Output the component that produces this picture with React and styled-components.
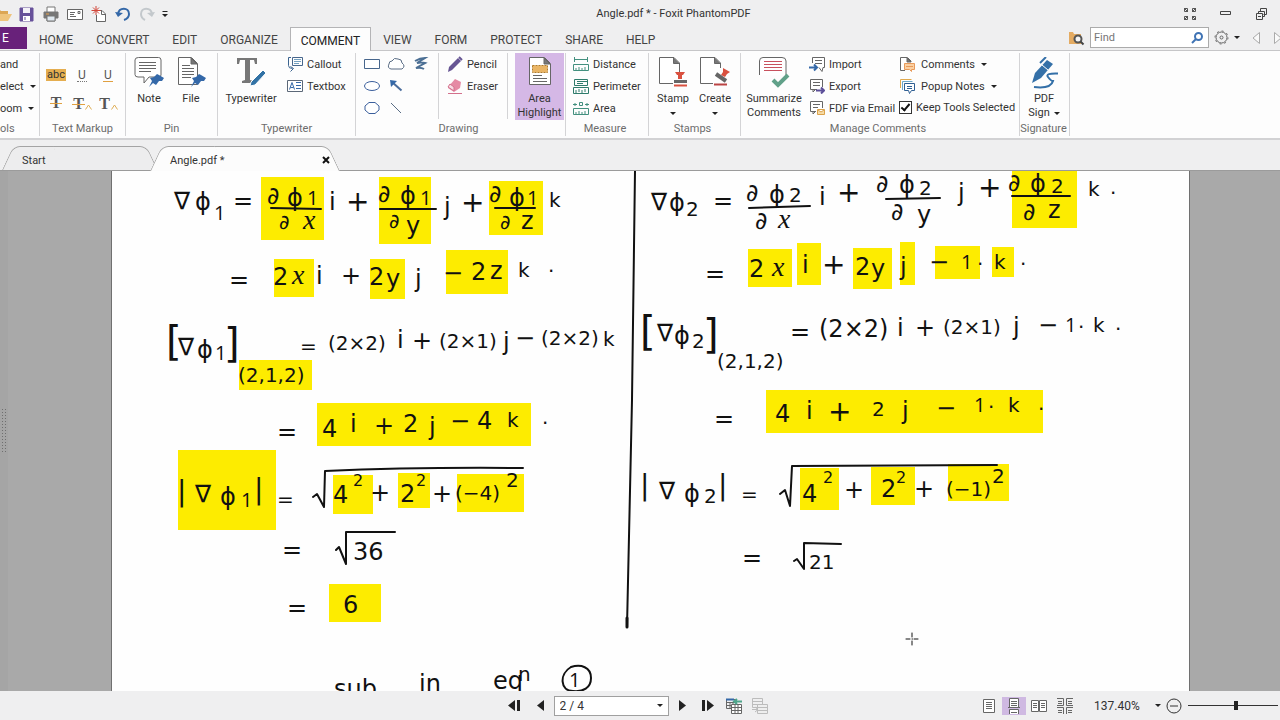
import React from "react";
import styled, { createGlobalStyle, css } from "styled-components";

const GlobalStyle = createGlobalStyle`
  *, *::before, *::after { box-sizing: border-box; }
  body { margin: 0; font-family: Roboto, "Noto Sans", sans-serif; font-size: 11px; color: #333; }
  button, input, select { font: inherit; color: inherit; }
`;

const Window = styled.div`
  display: flex;
  flex-direction: column;
  height: 100vh;
  overflow: hidden;
  background: #efeff0;
`;

const PlainButton = styled.button`
  display: flex;
  align-items: center;
  justify-content: center;
  padding: 0;
  border: 0;
  background: none;
`;

/* ---------- title bar ---------- */

const TitleBar = styled.header`
  display: flex;
  align-items: center;
  height: 27px;
  flex: none;
`;

const QuickButton = styled(PlainButton)`
  width: ${(p) => p.$w || 24}px;
  height: 27px;
  flex: none;
  overflow: hidden;
`;

const Title = styled.h1`
  flex: 1;
  margin: 0;
  padding-left: 4px;
  font-size: 11px;
  font-weight: 400;
  text-align: center;
`;

/* ---------- ribbon tabs ---------- */

const TabBar = styled.nav`
  display: flex;
  gap: 1px;
  height: 24px;
  flex: none;
  border-bottom: 1px solid #c6c6c8;
`;

const FileTab = styled(PlainButton)`
  width: 27px;
  height: 22px;
  padding-right: 16px;
  background: #68217a;
  color: #fff;
  font-size: 12px;
`;

const Tab = styled(PlainButton)`
  height: 23px;
  padding: 3px 11px 0;
  font-size: 12px;
  color: #444;
  ${(p) =>
    p.$active &&
    css`
      height: 24px;
      padding: 3px 10px 0;
      border: 1px solid #b4b4b6;
      border-bottom: 0;
      background: #fdfdfd;
      color: #222;
    `}
`;

const TabTools = styled.div`
  display: flex;
  align-items: center;
  gap: 5px;
  margin-left: auto;
  height: 21px;
`;

const FindBox = styled.label`
  display: flex;
  align-items: center;
  width: 119px;
  height: 21px;
  padding: 0 5px 0 3px;
  border: 1px solid #ababab;
  background: #fff;
`;

const FindInput = styled.input`
  flex: 1;
  min-width: 0;
  padding: 0;
  border: 0;
  outline: 0;
  background: none;
  &::placeholder { color: #767676; opacity: 1; }
`;

/* ---------- ribbon ---------- */

const Ribbon = styled.div`
  display: flex;
  flex: none;
  height: 89px;
  padding-top: 2px;
  border-bottom: 2px solid #d2d2d4;
  background: #fdfdfd;
`;

const Group = styled.section`
  display: flex;
  flex-direction: column;
  flex: none;
  width: ${(p) => p.$w}px;
  height: 83px;
  border-right: 1px solid #d4d4d6;
`;

const GroupBody = styled.div`
  display: flex;
  flex: 1;
  gap: ${(p) => p.$gap || 0}px;
  padding-left: ${(p) => p.$left || 0}px;
`;

const GroupLabel = styled.h2`
  margin: 0;
  height: 14px;
  padding-right: ${(p) => p.$right || 0}px;
  font-size: 11px;
  font-weight: 400;
  line-height: 14px;
  color: #6c6c6c;
  text-align: ${(p) => p.$align || "center"};
  white-space: nowrap;
`;

const Column = styled.div`
  display: flex;
  flex-direction: column;
`;

const RowButton = styled(PlainButton)`
  justify-content: flex-start;
  gap: ${(p) => (p.$caret ? 6 : 4)}px;
  height: 22px;
  white-space: nowrap;
`;

const BigButton = styled(PlainButton)`
  flex-direction: column;
  justify-content: flex-start;
  width: ${(p) => p.$w}px;
  height: 67px;
  padding-top: 4px;
  line-height: 14px;
  background: ${(p) => (p.$on ? "#d5b8e6" : "none")};
`;

const BigIcon = styled.span`
  flex: none;
  height: 35px;
`;

const IconGrid = styled.div`
  display: grid;
  grid-template-columns: repeat(${(p) => p.$cols}, ${(p) => p.$cell}px);
  grid-auto-rows: ${(p) => p.$row}px;
  padding-top: ${(p) => p.$top || 0}px;
`;

const Divider = styled.div`
  width: 1px;
  height: 66px;
  margin: 0 ${(p) => p.$right || 0}px 0 ${(p) => p.$left || 0}px;
  background: #d4d4d6;
`;

const CheckRow = styled.label`
  display: flex;
  align-items: center;
  gap: 4px;
  height: 20px;
  white-space: nowrap;
`;

const CheckBox = styled.input`
  appearance: none;
  display: flex;
  justify-content: center;
  width: 13px;
  height: 13px;
  margin: 0;
  border: 1px solid #333;
  background: #fff;
  &:checked::after {
    content: "";
    width: 5px;
    height: 9px;
    border: solid #111;
    border-width: 0 2px 2px 0;
    transform: rotate(40deg);
  }
`;

const Caret = styled.span`
  width: 0;
  height: 0;
  border: 3px solid transparent;
  border-top-color: #222;
  border-bottom-width: 0;
`;

const WithCaret = styled.span`
  display: flex;
  align-items: center;
  gap: 4px;
  height: 14px;
`;

/* ---------- document tabs ---------- */

const DocTabs = styled.div`
  display: flex;
  align-items: flex-end;
  flex: none;
  height: 31px;
  padding-left: 2px;
  border-bottom: 1px solid #9b9b9b;
`;

const DocTab = styled.div`
  position: relative;
  z-index: ${(p) => (p.$active ? 2 : 1)};
  display: flex;
  align-items: center;
  justify-content: space-between;
  width: ${(p) => p.$w}px;
  height: 25px;
  margin: 0 -8px -1px 0;
  padding: 3px 10px 0 20px;
  isolation: isolate;

  &::before, &::after {
    content: "";
    position: absolute;
    z-index: -1;
    top: 0;
    bottom: ${(p) => (p.$active ? 0 : 1)}px;
    background: ${(p) => (p.$active ? "#fcfcfc" : "#ededee")};
    border: 0 solid #a4a4a4;
    border-top-width: 1px;
  }
  &::before {
    left: 0;
    right: 50%;
    border-left-width: 1px;
    border-top-left-radius: 7px;
    transform: skewX(-25deg);
    transform-origin: bottom;
  }
  &::after {
    left: 40%;
    right: 0;
    border-right-width: 1px;
    border-top-right-radius: 7px;
    transform: skewX(25deg);
    transform-origin: bottom;
  }
`;

/* ---------- document view ---------- */

const Viewer = styled.main`
  display: flex;
  flex: 1;
  min-height: 0;
  background: #a9a9a9;
`;

const PanelGrip = styled.div`
  display: flex;
  align-items: center;
  justify-content: center;
  flex: none;
  width: 8px;
  background: #a5a5a5;
`;

const Paper = styled.article`
  position: relative;
  flex: 1;
  margin: 0 90px 0 103px;
  border: solid #707070;
  border-width: 0 1px;
  background: #fefefe;
  overflow: hidden;
`;

const Marks = styled.svg`
  position: absolute;
  left: 0;
  top: 0;
`;

/* window coordinates of the paper's top left corner */
const ORIGIN_X = 112;
const ORIGIN_Y = 171;

const Highlight = styled.div.attrs((p) => ({
  style: { left: p.$x - ORIGIN_X, top: p.$y - ORIGIN_Y, width: p.$w, height: p.$h },
}))`
  position: absolute;
  background: #fdec00;
`;

const Ink = styled.span.attrs((p) => ({
  style: { left: p.$x - ORIGIN_X - 2, top: p.$y - ORIGIN_Y - p.$size / 2 },
}))`
  position: absolute;
  font-family: ${(p) => (p.children === "1" ? '"Open Sans"' : '"DejaVu Sans"')}, sans-serif;
  font-size: ${(p) => p.$size}px;
  line-height: ${(p) => p.$size}px;
  color: #111;
  white-space: pre;
  ${(p) =>
    p.$cursive &&
    css`
      font-family: "Liberation Serif", serif;
      font-style: italic;
    `}
`;

const highlights = [
  [261, 177, 63, 63], [379, 177, 52, 67], [489, 181, 54, 54], [274, 259, 40, 38],
  [370, 259, 35, 40], [446, 250, 62, 44], [239, 360, 73, 30], [317, 403, 214, 43],
  [178, 450, 98, 80], [333, 475, 40, 39], [398, 473, 32, 35], [457, 474, 67, 38],
  [329, 584, 52, 38], [1012, 171, 65, 57], [748, 249, 44, 38], [797, 243, 24, 42],
  [853, 248, 39, 41], [900, 242, 15, 43], [935, 246, 45, 33], [992, 247, 22, 30],
  [766, 390, 277, 43], [800, 468, 39, 42], [871, 467, 44, 38], [948, 464, 61, 37],
];

const S = 16;
const M = 20;
const L = 24;
const XL = 28;
const XXL = 40;

const ink = [
  // gradient of the first surface
  [176, 201, "∇", L], [197, 202, "ϕ", L], [216, 213, "1", M], [235, 201, "=", L],
  [269, 196, "∂", L], [289, 198, "ϕ", L], [309, 198, "1", M], [281, 222, "∂", M], [305, 220, "x", XL, true],
  [331, 202, "i", L], [348, 202, "+", XL],
  [380, 194, "∂", L], [402, 196, "ϕ", L], [422, 198, "1", M], [391, 221, "∂", M], [408, 226, "y", L],
  [446, 207, "j", L], [463, 203, "+", XL],
  [491, 194, "∂", L], [511, 198, "ϕ", L], [529, 198, "1", M], [502, 222, "∂", M], [523, 221, "z", L],
  [551, 200, "k", M],
  [231, 280, "=", L], [275, 277, "2", L], [294, 275, "x", XL, true], [318, 276, "i", L], [343, 276, "+", L],
  [371, 277, "2", L], [388, 279, "y", L], [417, 279, "j", L], [445, 273, "−", L], [473, 272, "2", L],
  [492, 271, "z", L], [520, 270, "k", M], [550, 265, ".", M],
  [168, 341, "[", XXL], [180, 347, "∇", L], [199, 350, "ϕ", L], [217, 353, "1", M], [226, 343, "]", XXL],
  [240, 375, "(2,1,2)", M], [302, 346, "=", M], [330, 343, "(2×2)", M], [399, 340, "i", L], [414, 341, "+", L],
  [441, 341, "(2×1)", M], [505, 342, "j", L], [517, 338, "−", L], [543, 338, "(2×2)", M], [605, 339, "k", M],
  [279, 432, "=", L], [324, 429, "4", L], [352, 424, "i", L], [376, 426, "+", L], [405, 424, "2", L],
  [431, 427, "j", L], [452, 421, "−", L], [479, 421, "4", L], [509, 420, "k", M], [544, 417, ".", M],
  [179, 492, "|", XL], [197, 494, "∇", L], [222, 497, "ϕ", L], [243, 500, "1", M], [256, 490, "|", XL],
  [279, 499, "=", M], [335, 495, "4", L], [355, 481, "2", S], [372, 493, "+", L], [402, 494, "2", L],
  [418, 481, "2", S], [434, 494, "+", L], [457, 493, "(−4)", M], [508, 480, "2", M],
  [284, 550, "=", L], [355, 552, "36", L], [289, 608, "=", L], [345, 605, "6", L],
  [336, 689, "sub", L], [421, 684, "in", L], [495, 681, "eq", L], [520, 674, "n", M], [571, 680, "1", M],
  // gradient of the second surface
  [653, 202, "∇", L], [671, 203, "ϕ", L], [688, 209, "2", M], [715, 201, "=", L],
  [748, 193, "∂", L], [771, 195, "ϕ", L], [791, 195, "2", M], [757, 221, "∂", L], [780, 219, "x", XL, true],
  [821, 197, "i", L], [839, 193, "+", XL],
  [878, 184, "∂", L], [901, 185, "ϕ", L], [921, 188, "2", M], [893, 212, "∂", L], [919, 215, "y", L],
  [960, 193, "j", L], [980, 188, "+", XL],
  [1010, 183, "∂", L], [1032, 184, "ϕ", L], [1053, 186, "2", M], [1025, 212, "∂", L], [1050, 210, "z", L],
  [1090, 189, "k", M], [1112, 187, ".", M],
  [707, 274, "=", L], [751, 269, "2", L], [774, 267, "x", XL, true], [804, 265, "i", L], [824, 265, "+", XL],
  [857, 267, "2", L], [873, 269, "y", L], [902, 267, "j", L], [931, 262, "−", L], [963, 262, "1", M],
  [979, 264, "·", M], [996, 262, "k", M], [1022, 264, "·", M],
  [642, 331, "[", XXL], [659, 333, "∇", L], [676, 336, "ϕ", L], [694, 341, "2", M], [705, 334, "]", XXL],
  [719, 361, "(2,1,2)", M], [792, 332, "=", L], [821, 329, "(2×2)", L], [899, 328, "i", L], [917, 328, "+", L],
  [945, 327, "(2×1)", M], [1015, 327, "j", L], [1040, 325, "−", L], [1067, 325, "1", M], [1080, 327, "·", M],
  [1095, 325, "k", M], [1117, 323, ".", M],
  [716, 419, "=", L], [777, 414, "4", L], [808, 411, "i", L], [830, 412, "+", XL], [874, 409, "2", M],
  [904, 411, "j", L], [938, 408, "−", L], [976, 405, "1", M], [990, 407, "·", M], [1010, 405, "k", M],
  [1040, 409, "·", M],
  [642, 486, "|", XL], [661, 491, "∇", L], [686, 494, "ϕ", L], [706, 496, "2", M], [720, 486, "|", XL],
  [743, 494, "=", M], [804, 494, "4", L], [825, 478, "2", S], [846, 490, "+", L], [883, 489, "2", L],
  [898, 478, "2", S], [916, 489, "+", L], [948, 489, "(−1)", M], [994, 476, "2", M],
  [744, 558, "=", L], [811, 562, "21", M],
];

function Page() {
  return (
    <Paper>
      {highlights.map(([x, y, w, h]) => (
        <Highlight key={`${x}-${y}`} $x={x} $y={y} $w={w} $h={h} />
      ))}
      <Marks width="1078" height="520" viewBox="112 171 1078 520" fill="none" stroke="#111" strokeWidth="2" strokeLinecap="round" strokeLinejoin="round">
        <path d="M635 171 632 400 627 627" />
        <path d="M627 618v9" strokeWidth="3" />
        <path d="M271 208l50 1M380 209h56M495 208h40M749 208l61-2M886 199l54-1M1012 196h58" />
        <path d="M313 497l4-3 7 13 1-36q90-4 198-3M336 550l3-3 7 17V532h49M780 494l5-4 5 16 2-40 205-1M794 561l3-2 7 10V543l37 1" />
        <path d="M571 667c-12 7-11 24 2 24 10 1 18-3 18-13 0-11-10-14-20-11" />
        <path d="M906 639h4M914 639h4M912 633v4M912 641v4M912 639h.5" strokeWidth="1" />
      </Marks>
      {ink.map(([x, y, text, size, cursive], i) => (
        <Ink key={i} $x={x} $y={y} $size={size} $cursive={cursive}>{text}</Ink>
      ))}
    </Paper>
  );
}

/* ---------- status bar ---------- */

const StatusBar = styled.footer`
  display: grid;
  grid-template-columns: 1fr auto 1fr;
  align-items: center;
  flex: none;
  height: 29px;
  background: #efeff0;
`;

const Pager = styled.div`
  grid-column: 2;
  display: flex;
  align-items: center;
  padding-right: 6px;
`;

const PagerButton = styled(PlainButton)`
  width: 26px;
  height: 20px;
`;

const SelectBox = styled.span`
  display: flex;
  align-items: center;
  width: ${(p) => p.$w}px;
  height: 20px;
  padding-right: 5px;
  border: ${(p) => (p.$framed ? "1px solid #a0a0a0" : "0")};
  background: ${(p) => (p.$framed ? "#fff" : "none")};
`;

const Select = styled.select`
  appearance: none;
  flex: 1;
  min-width: 0;
  padding: 0 0 0 ${(p) => p.$left}px;
  border: 0;
  background: none;
  font-size: 12px;
`;

const ViewTools = styled.div`
  display: flex;
  align-items: center;
  justify-content: flex-end;
  padding-right: 2px;
`;

const ViewButton = styled(PlainButton)`
  width: ${(p) => p.$w || 26}px;
  height: 18px;
  background: ${(p) => (p.$on ? "#cfb9e2" : "none")};
`;

const ZoomSlider = styled.input`
  appearance: none;
  width: 90px;
  height: 12px;
  margin: 0 0 0 6px;
  background: linear-gradient(#333, #333) center / 100% 1px no-repeat;
  &::-webkit-slider-thumb {
    appearance: none;
    width: 4px;
    height: 9px;
    background: #222;
  }
`;

/* ---------- icons ---------- */

function Icon({ w = 16, h = 16, sw = 1, color = "#666", children }) {
  return (
    <svg width={w} height={h} viewBox={`0 0 ${w} ${h}`} fill="none" stroke={color} strokeWidth={sw} aria-hidden="true">
      {children}
    </svg>
  );
}

const pin = <path d="M23 17l2 1 5 3-2 3-3 0-3 4-3-2-4 4 3-6-2-3 4-1z" fill="#3468a8" stroke="none" />;

const icons = {
  folder: <Icon w={15}><path d="M-6 3h5l2 2h7v9H-6z" fill="#dca654" stroke="none" /><path d="M-4 8h16l-4 7H-8z" fill="#efc47c" stroke="none" /></Icon>,
  save: <Icon color="#67519a"><path d="M1 2h13v13H1z" fill="#67519a" /><path d="M4 2h7v5H4z" fill="#f3f1f8" stroke="none" /><path d="M4 10h7v5H4z" fill="#fff" stroke="none" /><path d="M6 11v3" /></Icon>,
  print: <Icon color="#777"><path d="M4 6V1h8v5" fill="#fff" /><path d="M1 6h14v6h-3v3H4v-3H1z" fill="#777" /><path d="M4 10h8v5H4z" fill="#dfe8ef" /><path d="M3 8h3" stroke="#e8a24c" /></Icon>,
  mail: <Icon><path d="M.5 3.500h15v10H.5z" fill="#fff" /><path d="M3 6.500h5M3 8.500h4M3 10.500h6M11 5.500h2v2h-2z" /></Icon>,
  newDoc: <Icon><path d="M7 4.500h4l3.500 3.500v7.500h-9V9" fill="#fff" /><path d="M10.500 4.500V8.500h4" /><path d="M5 0v9M.5 4.500h9M2 1.500l6 6M8 1.500l-6 6" stroke="#d2473a" /></Icon>,
  undo: <Icon color="#3468a8" sw={2}><path d="M3 8C4 1 14 1 14 8c0 3-2 5-5 6" /><path d="M0 6l3 5 5-4z" fill="#3468a8" stroke="none" /></Icon>,
  redo: <Icon color="#c3c8cc" sw={2}><path d="M13 8C12 1 2 1 2 8c0 3 2 5 4 6" /><path d="M16 6l-3 5-5-4z" fill="#c3c8cc" stroke="none" /></Icon>,
  more: <Icon w={8} h={8} color="#222"><path d="M1.500 1.500h5" /><path d="M1 4h6L4 7z" fill="#222" stroke="none" /></Icon>,
  full: <Icon w={14} h={14} color="#555"><path d="M1.500 1.500h3v3h-3zM9.500 1.500h3v3h-3zM1.500 9.500h3v3h-3zM9.500 9.500h3v3h-3zM1 1l4 4M13 1l-4 4M1 13l4-4M13 13l-4-4" /></Icon>,
  minimize: <Icon w={12} h={5} color="#444"><path d="M.5.5h10v3H.5z" /></Icon>,
  restore: <Icon w={12} h={12} color="#444"><path d="M4.500 3.500v-3h6v6h-3M2.500 5.500v-2h6v5h-2M.5 5.500h6v6h-6zM2 8.500h3" /></Icon>,
  folderFind: <Icon w={17}><path d="M1 2h4l1 2h7v10H1z" fill="#e4ab62" stroke="none" /><circle cx="10" cy="9" r="3.500" fill="#f6f6f6" stroke="#555" strokeWidth="2" /><path d="M12.500 11.500l3 3" stroke="#444" strokeWidth="2" /></Icon>,
  find: <Icon w={12} h={12} color="#3f73b4" sw={2}><circle cx="7.500" cy="4.500" r="3.500" /><path d="M5 7L1 11" /></Icon>,
  gear: <Icon w={15} h={15} color="#666"><circle cx="7.500" cy="7.500" r="5.500" /><circle cx="7.500" cy="7.500" r="6.500" strokeDasharray="2 3" /><circle cx="7.500" cy="7.500" r="1.500" /></Icon>,
  tri: <Icon w={9} h={14} color="#aaa"><path d="M7.500 1.500v11L1 7z" fill="#fafafa" /></Icon>,
  triR: <Icon w={7} h={14} color="#aaa"><path d="M1.500 1.500v11L8 7z" fill="#fafafa" /></Icon>,
  note: <Icon w={30} h={31}><path d="M4.500.5h20q2.500 0 2.500 2.500v15q0 2-2.500 2H15l-5 6v-6H4q-3 0-3-2.500V3Q1 .5 4.500.5z" fill="#fff" /><path d="M5 5.500h17M5 8.500h17M5 11.500h17M5 14.500h12" />{pin}</Icon>,
  file: <Icon w={30} h={31}><path d="M2.500.5h13l6 6v21h-19z" fill="#fff" /><path d="M15 1v6h6z" fill="#777" /><path d="M6 8.500h8M6 11.500h12M6 14.500h12M6 17.500h12M6 20.500h9" />{pin}</Icon>,
  type: <Icon w={30} h={30}><path d="M1 1h20v6h-2l-1-4h-4v20l3 1v2H6v-2l3-1V3H4L3 7H1z" fill="#777" stroke="none" /><path d="M27 13l3 3-11 12-5 1 1-4z" fill="#3272a5" stroke="#fff" /></Icon>,
  callout: <Icon><path d="M5.500 1.500h10v8h-10z" stroke="#47668c" /><path d="M7 3.500h7M7 5.500h7M7 7.500h5" stroke="#73a0c0" /><path d="M4 1.500H1.500v8q0 3 4 3M3.500 10.500l3 2-3 3" stroke="#3b638f" /></Icon>,
  textbox: <Icon><path d="M.5 2.500h15v11H.5z" stroke="#5c6878" fill="#fff" /><path d="M2.500 11.500l2.500-7 2.500 7M3.500 9.500h3M9 4.500h5M9 7.500h5M9 10.500h5" stroke="#3468a8" /></Icon>,
  rect: <Icon w={18} color="#47668c"><path d="M1.500 3.500h15v9h-15z" fill="#fff" /></Icon>,
  cloud: <Icon w={18} color="#5a6d85"><path d="M4 13Q0 12 2 8q0-3 3-3 2-4 6-2 4 0 4 4 4 3 0 6z" fill="#fff" /></Icon>,
  zig: <Icon w={18} color="#4c6f94"><path d="M4 5q5-3 10-3L6 7q4-1 8 0L5 12q5-1 8 1" strokeWidth="2" /></Icon>,
  oval: <Icon w={18} color="#3b5f9c"><ellipse cx="9" cy="8" rx="7.500" ry="4.500" fill="#fff" /></Icon>,
  arrow: <Icon w={18} color="#4a6c9c"><path d="M14.500 12.500L5 4" strokeWidth="2" /><path d="M3 2l7 1-6 6z" fill="#3468a8" stroke="none" /></Icon>,
  poly: <Icon w={18} color="#3b5f9c"><path d="M6 2.500h6l4 3.500v4l-4 3.500H6L2 10V6z" fill="#fff" /></Icon>,
  line: <Icon w={18} color="#5a6d85"><path d="M4 3l10 10" /></Icon>,
  pencil: <Icon><path d="M11 2l3 3-9 9-4 2 1-5z" fill="#665593" stroke="none" /><path d="M12 1l3 3" stroke="#665593" strokeWidth="2" /></Icon>,
  eraser: <Icon><path d="M8 1l6 3-1 6-6 4-6-4 1-2z" fill="#e58aa4" stroke="none" /><path d="M1 9l6 4v-4L3 6z" fill="#f8dce4" stroke="#d3708c" /><path d="M1 15.500h14" stroke="#d3708c" /></Icon>,
  area: <Icon w={22} h={28}><path d="M.5.5h15l6 6v21H.5z" fill="#fff" /><path d="M15 1v6h6z" fill="#777" /><path d="M3.500 8.500h15v7h-15z" fill="#eab565" stroke="#b07c2c" strokeDasharray="2 1" /><path d="M4 18.500h9M4 21.500h14M4 24.500h14" /></Icon>,
  distance: <Icon color="#43907f"><path d="M1.500 1v5M14.500 1v5M2 3.500h12M.5 8.500h15v6H.5zM3 12v2M6 11v3M9 12v2M12 11v3" /></Icon>,
  perimeter: <Icon color="#2f7c6c"><path d="M1.500 1.500h13v6h-13zM4 3.500h10M4 5.500h6M.5 9.500h15v6H.5zM3 12v3M6 11v3M9 12v3M12 11v3" /></Icon>,
  areaM: <Icon color="#43907f"><path d="M0 4.500h4M12 4.500h4M2 3v3M14 3v3M6.500 2.500h3v3h-3zM.5 8.500h15v6H.5zM3 12v2M6 11v3M9 12v2M12 11v3" /></Icon>,
  stamp: <Icon w={30} h={31}><path d="M21.500 15V6L16 .5H1.500v26H15" fill="#fff" /><path d="M15.500 1v5.500H21z" fill="#777" /><path d="M17 15h10l-2 3h-1v4h-4v-4h-1z" fill="#d9503f" stroke="none" /><path d="M16 24.500h13" stroke="#666" strokeWidth="3" /><path d="M16 28.500h13" stroke="#d9503f" strokeWidth="2" /></Icon>,
  create: <Icon w={32} h={30}><path d="M21.500 11V6L16 .5H1.500v26H14" fill="#fff" /><path d="M15.500 1v5.500H21z" fill="#777" /><path d="M24 11l7 4-3 2-2 3-4-2 2-3z" fill="#d9503f" stroke="none" /><path d="M17 17l10 7" stroke="#666" strokeWidth="4" /><path d="M15 27.500h13" stroke="#b44" strokeWidth="2" /></Icon>,
  summarize: <Icon w={32} h={32}><path d="M1.500 18V4Q1.500.5 5 .5h19q4 0 4 3.500v14" fill="#fff" /><path d="M6 4.500h18M6 7.500h18M6 10.500h18M6 13.500h18" stroke="#c8515e" /><path d="M15 23l5 5 10-10" stroke="#61a189" strokeWidth="4" /></Icon>,
  import: <Icon><path d="M3.500 7V1.500h12v10H14l-1 4-3-4" fill="#fff" /><path d="M6 4.500h7M6 7.500h7" /><path d="M0 11.500h7M5 8.500l3 3-3 3" stroke="#3468a8" strokeWidth="2" /></Icon>,
  export: <Icon><path d="M8 11.500H1.500v-10h12V9M4 11v3l3-3" fill="#fff" /><path d="M4 4.500h7M4 7.500h7" /><path d="M7 12.500h8M12 9.500l3 3-3 3" stroke="#5c4f99" strokeWidth="2" /></Icon>,
  email: <Icon><path d="M7 11.500H1.500v-10h12V8M4 11v3l3-3" fill="#fff" /><path d="M4 4.500h7M4 7.500h5" /><path d="M8.500 9.500h7v5h-7zM9 10l3 2 3-2" stroke="#dba24a" fill="#f6dba6" /></Icon>,
  comments: <Icon><path d="M6 14.500H1.500V1.500h7l4 4" fill="#fff" /><path d="M8 2v4h4z" fill="#777" /><path d="M5.500 7.500h10v6h-3v2l-2-2h-5z" fill="#fbd0a2" stroke="#e89a5a" /><path d="M7 10.500h7" stroke="#e89a5a" /></Icon>,
  popup: <Icon><path d="M1.500 10V1.500h11" stroke="#e0a94e" /><path d="M3.500 12V3.500h10" stroke="#6fa8c8" /><path d="M5.500 5.500h10v7h-3l-2 3-1-3h-4z" fill="#fff" stroke="#2f5f93" /><path d="M8 8.500h5M8 10.500h5" stroke="#2f5f93" /></Icon>,
  sign: <Icon w={30} h={32} color="#3470a8"><path d="M6 16L18 3l6 4L12 21l-9 5z" fill="#3470a8" stroke="none" /><path d="M13 8l6 5" stroke="#fff" /><path d="M11 6l6-6" strokeWidth="2" /><path d="M29 16.500Q16 16 19 20t5 4q-2 8-19 6" strokeWidth="2" /></Icon>,
  close: <Icon w={8} h={8} color="#111"><path d="M1 1l6 6M7 1L1 7" strokeWidth="2" /></Icon>,
  first: <Icon w={13} h={13}><path d="M7 1v11L0 6.500zM9 1h3v11H9z" fill="#222" stroke="none" /></Icon>,
  prev: <Icon w={8} h={13}><path d="M7 1v11L0 6.500z" fill="#222" stroke="none" /></Icon>,
  next: <Icon w={8} h={13}><path d="M1 1v11l7-5.500z" fill="#222" stroke="none" /></Icon>,
  last: <Icon w={13} h={13}><path d="M6 1v11l7-5.500zM1 1h3v11H1z" fill="#222" stroke="none" /></Icon>,
  prevView: <Icon><path d="M.5 1.500h10v9H.5zM1 4.500h9M1 7.500h9M4 4v6M7 4v6" /><path d="M0 1.500h8" stroke="#3468a8" strokeWidth="2" /><path d="M5.500 6.500h10v9h-10z" fill="#fff" /><path d="M6 9.500h9M6 12.500h9M9 7v8M12 7v8" /><path d="M16 3.500H9M11 1L8 3.500 11 6" stroke="#4fa58b" strokeWidth="2" /></Icon>,
  nextView: <Icon color="#bcbcbc"><path d="M.5.5h10v9H.5zM1 3.500h9M1 6.500h9" /><path d="M5.500 6.500h10v9h-10z" fill="#eee" /><path d="M6 9.500h9M6 12.500h9M0 11.500h6M3 9l3 2.500L3 14" /></Icon>,
  single: <Icon w={12} h={14}><path d="M.5.5h11v13H.5z" fill="#fff" /><path d="M3 3.500h6M3 5.500h6M3 7.500h6M3 9.500h6" /></Icon>,
  continuous: <Icon w={12}><path d="M1.500.5h9v9h-9zM1.500 16v-4.500h9V16" fill="#fff" /><path d="M3 3.500h6M3 5.500h6M3 7.500h6M3 14.500h6M0 9.500h12" /></Icon>,
  facing: <Icon w={16} h={14}><path d="M.5 1.500h7v11h-7zM8.500 1.500h7v11h-7z" fill="#fff" /><path d="M2 4.500h4M2 6.500h4M2 8.500h4M10 4.500h4M10 6.500h4M10 8.500h4" /></Icon>,
  facingC: <Icon><path d="M0 .5h6.500v7H0M16 .5H9.500v7H16M0 9.500h6.500V16M16 9.500H9.500V16M1 3.500h4M1 5.500h4M11 3.500h4M11 5.500h4M1 12.500h4M1 14.500h4M11 12.500h4M11 14.500h4" /></Icon>,
  minus: <Icon color="#333"><circle cx="8" cy="8" r="7" /><path d="M4 8h8" /></Icon>,
  grip: <Icon w={6} h={44} color="#6f6f6f"><path d="M1.500 0v44M4.500 0v44" strokeDasharray="1 2" /></Icon>,
  insert: <Icon w={7} h={6} color="#dfae56"><path d="M.5 5.500L3.500 1l3 4.500" /></Icon>,
};

/* ---------- text markup buttons ---------- */

const MarkupButton = styled(PlainButton)`
  align-items: ${(p) => (p.$mark ? "flex-end" : "center")};
  width: 26px;
  height: 28px;
  padding-bottom: ${(p) => (p.$mark ? 7 : 0)}px;
`;

const MarkupGlyph = styled.span`
  position: relative;
  padding: 0 1px;
  font-family: ${(p) => (p.$serif ? `"Liberation Serif", serif` : "inherit")};
  font-size: ${(p) => (p.$serif ? 16 : p.$fill ? 11 : 12)}px;
  font-weight: ${(p) => (p.$serif ? 700 : 400)};
  line-height: 12px;
  color: ${(p) => (p.$fill ? "#333" : "#555")};
  background: ${(p) => (p.$fill ? "#e5ae50" : "none")};
  border-bottom: ${(p) => p.$under || "0"};
  ${(p) =>
    p.$strike &&
    css`
      &::after {
        content: "";
        position: absolute;
        left: 0;
        right: 0;
        top: 6px;
        height: 1px;
        background: #e0a040;
      }
    `}
`;

const quick = [
  ["Open", "folder", 15], ["Save", "save"], ["Print", "print"], ["Email", "mail"],
  ["New", "newDoc"], ["Undo", "undo"], ["Redo", "redo"], ["Customize", "more", 12],
];

const tabs = ["HOME", "CONVERT", "EDIT", "ORGANIZE", "COMMENT", "VIEW", "FORM", "PROTECT", "SHARE", "HELP"];

const Row = ({ icon, children, caret }) => (
  <RowButton $caret={caret}>
    {icon && icons[icon]}
    {children}
    {caret && <Caret />}
  </RowButton>
);

const Big = ({ icon, w, on, children }) => (
  <BigButton $w={w} $on={on}>
    <BigIcon>{icons[icon]}</BigIcon>
    {children}
  </BigButton>
);

export default function App() {
  return (
    <Window>
      <GlobalStyle />
      <TitleBar>
        {quick.map(([label, icon, w]) => (
          <QuickButton key={label} aria-label={label} $w={w}>{icons[icon]}</QuickButton>
        ))}
        <Title>Angle.pdf * - Foxit PhantomPDF</Title>
        <QuickButton aria-label="Full screen" $w={36}>{icons.full}</QuickButton>
        <QuickButton aria-label="Minimize" $w={36}>{icons.minimize}</QuickButton>
        <QuickButton aria-label="Restore" $w={36}>{icons.restore}</QuickButton>
      </TitleBar>

      <TabBar>
        <FileTab>E</FileTab>
        {tabs.map((t) => (
          <Tab key={t} $active={t === "COMMENT"}>{t}</Tab>
        ))}
        <TabTools>
          <PlainButton aria-label="Search folder">{icons.folderFind}</PlainButton>
          <FindBox>
            <FindInput aria-label="Find" placeholder="Find" />
            {icons.find}
          </FindBox>
          <PlainButton aria-label="Settings">{icons.gear}</PlainButton>
          <Caret />
          <QuickButton aria-label="Previous" $w={22}>{icons.tri}</QuickButton>
          <QuickButton aria-label="Next" $w={8}>{icons.triR}</QuickButton>
        </TabTools>
      </TabBar>

      <Ribbon>
        <Group $w={40}>
          <GroupBody>
            <Column>
              <Row>and</Row>
              <Row caret>elect</Row>
              <Row caret>oom</Row>
            </Column>
          </GroupBody>
          <GroupLabel $align="left">ols</GroupLabel>
        </Group>

        <Group $w={86}>
          <GroupBody $left={3}>
            <IconGrid $cols={3} $cell={26} $row={28} $top={8}>
              <MarkupButton aria-label="Highlight"><MarkupGlyph $fill>abc</MarkupGlyph></MarkupButton>
              <MarkupButton aria-label="Squiggly underline"><MarkupGlyph $under="1px dotted #777">U</MarkupGlyph></MarkupButton>
              <MarkupButton aria-label="Underline"><MarkupGlyph $under="1px solid #e0a040">U</MarkupGlyph></MarkupButton>
              <MarkupButton aria-label="Strikeout"><MarkupGlyph $serif $strike>T</MarkupGlyph></MarkupButton>
              <MarkupButton aria-label="Replace" $mark><MarkupGlyph $serif $strike>T</MarkupGlyph>{icons.insert}</MarkupButton>
              <MarkupButton aria-label="Insert" $mark><MarkupGlyph $serif>T</MarkupGlyph>{icons.insert}</MarkupButton>
            </IconGrid>
          </GroupBody>
          <GroupLabel>Text Markup</GroupLabel>
        </Group>

        <Group $w={92}>
          <GroupBody $left={2}>
            <Big icon="note" w={42}>Note</Big>
            <Big icon="file" w={42}>File</Big>
          </GroupBody>
          <GroupLabel>Pin</GroupLabel>
        </Group>

        <Group $w={138}>
          <GroupBody $left={5} $gap={8}>
            <Big icon="type" w={56}>Typewriter</Big>
            <Column>
              <Row icon="callout">Callout</Row>
              <Row icon="textbox">Textbox</Row>
            </Column>
          </GroupBody>
          <GroupLabel>Typewriter</GroupLabel>
        </Group>

        <Group $w={210}>
          <GroupBody $left={4}>
            <IconGrid $cols={3} $cell={24} $row={22}>
              {["rect", "cloud", "zig", "oval", "arrow", null, "poly", "line"].map((n, i) =>
                n ? <PlainButton key={i} aria-label={n}>{icons[n]}</PlainButton> : <span key={i} />
              )}
            </IconGrid>
            <Divider $left={6} $right={8} />
            <Column>
              <Row icon="pencil">Pencil</Row>
              <Row icon="eraser">Eraser</Row>
            </Column>
            <Divider $left={9} $right={7} />
            <Big icon="area" w={49} on>
              <span>Area</span>
              <span>Highlight</span>
            </Big>
          </GroupBody>
          <GroupLabel $right={4}>Drawing</GroupLabel>
        </Group>

        <Group $w={83}>
          <GroupBody $left={7}>
            <Column>
              <Row icon="distance">Distance</Row>
              <Row icon="perimeter">Perimeter</Row>
              <Row icon="areaM">Area</Row>
            </Column>
          </GroupBody>
          <GroupLabel $right={4}>Measure</GroupLabel>
        </Group>

        <Group $w={92}>
          <GroupBody $left={3}>
            <Big icon="stamp" w={42}><span>Stamp</span><WithCaret><Caret /></WithCaret></Big>
            <Big icon="create" w={42}><span>Create</span><WithCaret><Caret /></WithCaret></Big>
          </GroupBody>
          <GroupLabel $right={4}>Stamps</GroupLabel>
        </Group>

        <Group $w={279}>
          <GroupBody $left={4}>
            <Big icon="summarize" w={58}>
              <span>Summarize</span>
              <span>Comments</span>
            </Big>
            <GroupBody $left={6} $gap={4}>
              <Column>
                <Row icon="import">Import</Row>
                <Row icon="export">Export</Row>
                <Row icon="email">FDF via Email</Row>
              </Column>
              <Column>
                <Row icon="comments" caret>Comments</Row>
                <Row icon="popup" caret>Popup Notes</Row>
                <CheckRow><CheckBox type="checkbox" defaultChecked />Keep Tools Selected</CheckRow>
              </Column>
            </GroupBody>
          </GroupBody>
          <GroupLabel $right={4}>Manage Comments</GroupLabel>
        </Group>

        <Group $w={50}>
          <GroupBody>
            <Big icon="sign" w={48}>
              <span>PDF</span>
              <WithCaret>Sign<Caret /></WithCaret>
            </Big>
          </GroupBody>
          <GroupLabel $right={2}>Signature</GroupLabel>
        </Group>
      </Ribbon>

      <DocTabs>
        <DocTab $w={156}>Start</DocTab>
        <DocTab $w={190} $active>
          Angle.pdf *
          <PlainButton aria-label="Close tab">{icons.close}</PlainButton>
        </DocTab>
      </DocTabs>

      <Viewer>
        <PanelGrip>{icons.grip}</PanelGrip>
        <Page />
      </Viewer>

      <StatusBar>
        <Pager>
          <PagerButton aria-label="First page">{icons.first}</PagerButton>
          <PagerButton aria-label="Previous page">{icons.prev}</PagerButton>
          <SelectBox $w={115} $framed>
            <Select aria-label="Page" defaultValue="2" $left={5}>
              <option value="2">2 / 4</option>
            </Select>
            <Caret />
          </SelectBox>
          <PagerButton aria-label="Next page">{icons.next}</PagerButton>
          <PagerButton aria-label="Last page">{icons.last}</PagerButton>
          <PagerButton aria-label="Previous view">{icons.prevView}</PagerButton>
          <PagerButton aria-label="Next view">{icons.nextView}</PagerButton>
        </Pager>
        <ViewTools>
          <ViewButton aria-label="Single page">{icons.single}</ViewButton>
          <ViewButton aria-label="Continuous" $on $w={24}>{icons.continuous}</ViewButton>
          <ViewButton aria-label="Facing">{icons.facing}</ViewButton>
          <ViewButton aria-label="Continuous facing">{icons.facingC}</ViewButton>
          <SelectBox $w={88}>
            <Select aria-label="Zoom" defaultValue="137" $left={16}>
              <option value="137">137.40%</option>
            </Select>
            <Caret />
          </SelectBox>
          <PlainButton aria-label="Zoom out">{icons.minus}</PlainButton>
          <ZoomSlider type="range" aria-label="Zoom level" min="0" max="100" defaultValue="54" />
        </ViewTools>
      </StatusBar>
    </Window>
  );
}
